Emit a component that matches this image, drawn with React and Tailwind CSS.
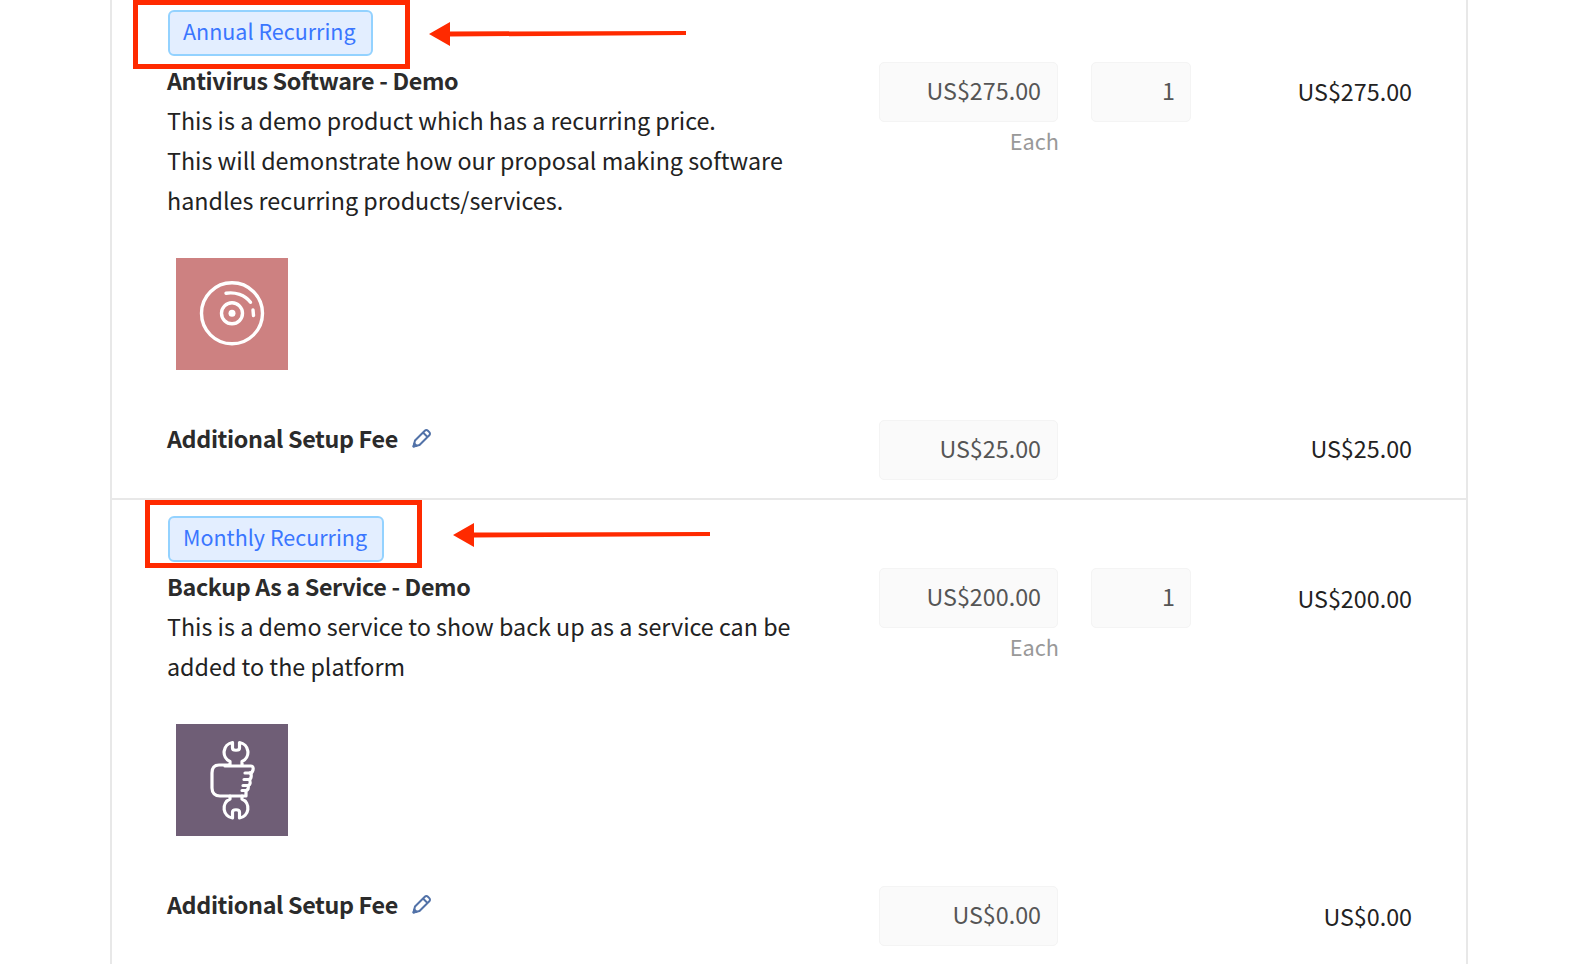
const DiscIcon = () => (
  <svg viewBox="0 0 112 112" className="w-[112px] h-[112px]" fill="none" stroke="white" strokeWidth="3.4" strokeLinecap="round">
    <circle cx="56" cy="55.3" r="30.5" />
    <circle cx="56" cy="55.3" r="10.5" />
    <circle cx="56" cy="55.3" r="3.5" fill="white" stroke="none" />
    <path d="M50 35.3 C59 33.8 69 36.8 74.5 44.3" />
    <path d="M77 52 L77.5 57.5" />
  </svg>
);

const WrenchIcon = () => (
  <svg viewBox="0 0 112 112" className="w-[112px] h-[112px]" fill="none" stroke="white" strokeWidth="3.2" strokeLinecap="round" strokeLinejoin="round">
    <path d="M54 41 V37.5 A10 10 0 0 1 56.5 18.5 V24 C56.5 27 63.5 27 63.5 24 V18.5 A10 10 0 0 1 66 37.5 V41" />
    <path d="M54 72 V75 A10 10 0 0 0 56.5 94 V88 C56.5 85 63.5 85 63.5 88 V94 A10 10 0 0 0 66 75 V72" />
    <path d="M53 41 H43 C38 41 36 44 36 49 V64 C36 69 39 72 44 72 H70 V66.5" />
    <path d="M49 42 H75 C77 42 77.5 44 77 46 C76.5 48 75 49 74 49 H69" />
    <path d="M74 49 C76 50 75.5 55 73 55.5 H68" />
    <path d="M73 55.5 C75 57 74.5 61 72 61.5 H67" />
    <path d="M72 61.5 C73 64 72 66 70 66.5 H66" />
  </svg>
);

const PencilIcon = () => (
  <svg viewBox="0 0 20 20" className="w-[20px] h-[20px]" fill="none" stroke="#5272a8" strokeWidth="2" strokeLinejoin="round">
    <path d="M1.5 18.5 L3 12.5 L12.8 2.7 C13.7 1.8 15 1.8 15.9 2.7 L17.3 4.1 C18.2 5 18.2 6.3 17.3 7.2 L7.5 17 Z" />
    <path d="M11 4.5 L15.5 9" />
    <path d="M1.5 18.5 L2.3 15.5 L4.5 17.7 Z" fill="#5272a8" />
  </svg>
);

const Badge = ({ children }) => (
  <span className="inline-flex items-center h-[46px] ml-[1px] pb-[3px] pl-[13px] pr-[15px] rounded-[6px] border-2 border-[#93d2ff] bg-[#e3eeff] text-[#3a76ff] text-[21.5px]">{children}</span>
);

const Field = ({ value, className }) => (
  <div className={`h-[60px] flex items-center justify-end pb-[3px] rounded-[5px] border border-[#f4f4f4] bg-[#fafafa] text-[#555] ${className}`}>{value}</div>
);

const SetupFee = ({ value, className, totalClass }) => (
  <div className={`flex items-start ${className}`}>
    <div className="w-[712px] -mt-[2px] flex items-center gap-[14px] font-bold tracking-[-0.35px] text-[#2b2b2b] leading-[40px]">
      Additional Setup Fee
      <PencilIcon />
    </div>
    <Field value={value} className="w-[179px] pr-[16px]" />
    <div className={`flex-1 text-right leading-[40px] text-[#222] ${totalClass}`}>{value}</div>
  </div>
);

const Item = ({ badge, title, body, price, fee, icon, tileClass, className, totalClass, feeTotalClass }) => (
  <div className={`pl-[55px] pr-[54px] ${className}`}>
    <Badge>{badge}</Badge>
    <div className="flex items-start mt-[6px]">
      <div className="w-[712px] -mt-[2px] pr-[60px] text-[#222] leading-[40px]">
        <div className="font-bold tracking-[-0.35px] text-[#2b2b2b]">{title}</div>
        {body}
      </div>
      <div className="w-[179px]">
        <Field value={price} className="pr-[16px]" />
        <div className="-mr-[1px] text-right text-[#999] text-[21.7px] leading-[38px]">Each</div>
      </div>
      <Field value="1" className="w-[100px] ml-[33px] pr-[15px]" />
      <div className={`flex-1 text-right leading-[40px] text-[#222] ${totalClass}`}>{price}</div>
    </div>
    <div className={`w-[112px] h-[112px] ml-[9px] mt-[38px] ${tileClass}`}>{icon}</div>
    <SetupFee value={fee} className="mt-[50px]" totalClass={feeTotalClass} />
  </div>
);

const Callout = ({ className, arrowClass }) => (
  <>
    <div className={`absolute border-[5px] border-[#ff2a00] ${className}`} />
    <svg viewBox="0 0 260 26" className={`absolute w-[260px] h-[26px] ${arrowClass}`}>
      <path d="M1 13 L22 1 V10.5 L258 10 V14 L22 15.5 V25 Z" fill="#ff2a00" />
    </svg>
  </>
);

export default function App() {
  return (
    <div className="relative w-[1572px] h-[964px] overflow-hidden bg-white font-['Noto_Sans_CJK_SC',sans-serif] text-[23.3px]">
      <div className="ml-[110px] w-[1358px] h-[964px] border-x-2 border-[#e8e8e8]">
        <Item
          badge="Annual Recurring"
          title="Antivirus Software - Demo"
          body={<>This is a demo product which has a recurring price.<br />This will demonstrate how our proposal making software handles recurring products/services.</>}
          price="US$275.00"
          fee="US$25.00"
          icon={<DiscIcon />}
          tileClass="bg-[#cd8181]"
          className="pt-[10px] h-[500px] border-b-2 border-[#e8e8e8]"
          totalClass="pt-[9px]"
          feeTotalClass="pt-[8px]"
        />
        <Item
          badge="Monthly Recurring"
          title="Backup As a Service - Demo"
          body={<>This is a demo service to show back up as a service can be added to the platform</>}
          price="US$200.00"
          fee="US$0.00"
          icon={<WrenchIcon />}
          tileClass="bg-[#6f5e76]"
          className="pt-[16px]"
          totalClass="pt-[10px]"
          feeTotalClass="pt-[10px]"
        />
      </div>
      <Callout className="left-[133px] top-0 w-[277px] h-[69px]" arrowClass="left-[428px] top-[21px]" />
      <Callout className="left-[145px] top-[500px] w-[277px] h-[68px]" arrowClass="left-[452px] top-[522px]" />
    </div>
  );
}
